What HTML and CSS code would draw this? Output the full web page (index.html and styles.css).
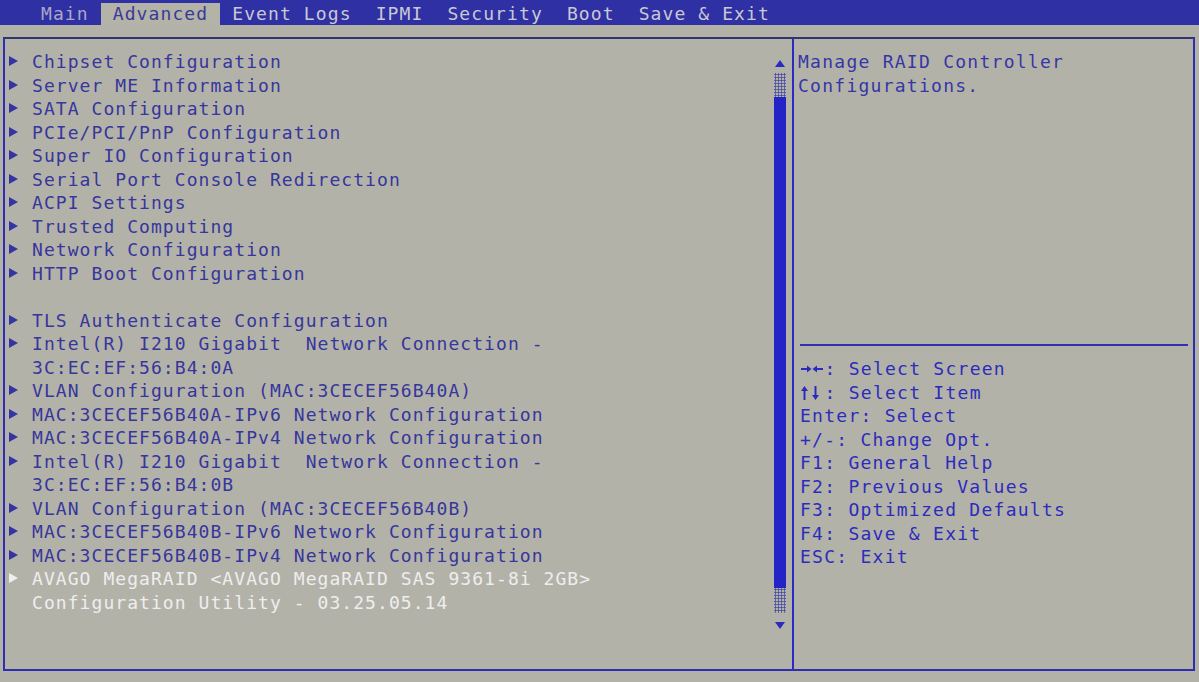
FILE: index.html
```html
<!DOCTYPE html>
<html>
<head>
<meta charset="utf-8">
<link rel="stylesheet" href="styles.css">
</head>
<body>
<div class="topbar">
  <span class="tab tab-dim">Main</span>
  <span class="tab tab-active">Advanced</span>
  <span class="tab">Event Logs</span>
  <span class="tab">IPMI</span>
  <span class="tab">Security</span>
  <span class="tab">Boot</span>
  <span class="tab">Save &amp; Exit</span>
</div>
<div class="frame">
  <div class="left">
    <div class="menu">
      <div class="row"><span class="mark"><i></i></span><span>Chipset Configuration</span></div>
      <div class="row"><span class="mark"><i></i></span><span>Server ME Information</span></div>
      <div class="row"><span class="mark"><i></i></span><span>SATA Configuration</span></div>
      <div class="row"><span class="mark"><i></i></span><span>PCIe/PCI/PnP Configuration</span></div>
      <div class="row"><span class="mark"><i></i></span><span>Super IO Configuration</span></div>
      <div class="row"><span class="mark"><i></i></span><span>Serial Port Console Redirection</span></div>
      <div class="row"><span class="mark"><i></i></span><span>ACPI Settings</span></div>
      <div class="row"><span class="mark"><i></i></span><span>Trusted Computing</span></div>
      <div class="row"><span class="mark"><i></i></span><span>Network Configuration</span></div>
      <div class="row"><span class="mark"><i></i></span><span>HTTP Boot Configuration</span></div>
      <div class="row"><span class="mark"></span><span>&nbsp;</span></div>
      <div class="row"><span class="mark"><i></i></span><span>TLS Authenticate Configuration</span></div>
      <div class="row"><span class="mark"><i></i></span><span>Intel(R) I210 Gigabit&nbsp; Network Connection -<br>3C:EC:EF:56:B4:0A</span></div>
      <div class="row"><span class="mark"><i></i></span><span>VLAN Configuration (MAC:3CECEF56B40A)</span></div>
      <div class="row"><span class="mark"><i></i></span><span>MAC:3CECEF56B40A-IPv6 Network Configuration</span></div>
      <div class="row"><span class="mark"><i></i></span><span>MAC:3CECEF56B40A-IPv4 Network Configuration</span></div>
      <div class="row"><span class="mark"><i></i></span><span>Intel(R) I210 Gigabit&nbsp; Network Connection -<br>3C:EC:EF:56:B4:0B</span></div>
      <div class="row"><span class="mark"><i></i></span><span>VLAN Configuration (MAC:3CECEF56B40B)</span></div>
      <div class="row"><span class="mark"><i></i></span><span>MAC:3CECEF56B40B-IPv6 Network Configuration</span></div>
      <div class="row"><span class="mark"><i></i></span><span>MAC:3CECEF56B40B-IPv4 Network Configuration</span></div>
      <div class="row row-sel"><span class="mark"><i></i></span><span>AVAGO MegaRAID &lt;AVAGO MegaRAID SAS 9361-8i 2GB&gt;<br>Configuration Utility - 03.25.05.14</span></div>
    </div>
    <div class="scroll">
      <div class="arrow-up"></div>
      <div class="dots dots-top"></div>
      <div class="thumb"></div>
      <div class="dots dots-bot"></div>
      <div class="arrow-down"></div>
    </div>
  </div>
  <div class="right">
    <div class="help">Manage RAID Controller<br>Configurations.</div>
    <div class="rule"></div>
    <div class="keys">
      <div><svg class="arr" width="24" height="14" viewBox="0 0 24 14"><path d="M1 6h6V3.5l4.5 3.5L7 10.5V8H1z M23 6h-6V3.5L12.5 7 17 10.5V8h6z" fill="currentColor"/></svg>: Select Screen</div>
      <div><svg class="arr" width="24" height="14" viewBox="0 0 24 14"><path d="M3.5 14V5H1l3.5-5L8 5H5.5v9z M14.5 0v9H12l3.5 5L19 9h-2.5V0z" fill="currentColor"/></svg>: Select Item</div>
      <div>Enter: Select</div>
      <div>+/-: Change Opt.</div>
      <div>F1: General Help</div>
      <div>F2: Previous Values</div>
      <div>F3: Optimized Defaults</div>
      <div>F4: Save &amp; Exit</div>
      <div>ESC: Exit</div>
    </div>
  </div>
</div>
</body>
</html>
```
FILE: styles.css
```css
html, body {
  margin: 0;
  padding: 0;
}
body {
  width: 1199px;
  height: 682px;
  overflow: hidden;
  background: #b3b2a9;
  font-family: "DejaVu Sans Mono", "Liberation Mono", monospace;
  font-size: 18px;
}
.topbar {
  height: 25px;
  background: #2f30a4;
  display: flex;
  align-items: flex-end;
  padding-left: 29px;
}
.tab {
  height: 22px;
  line-height: 22px;
  padding: 0 12px;
  color: #c9c9d2;
  letter-spacing: 1.1px;
  white-space: pre;
}
.tab-dim {
  color: #a9a9c4;
}
.tab-active {
  background: #b4b3a8;
  color: #3a3a98;
}
.frame {
  margin: 12px 0 0 3px;
  width: 1188px;
  height: 630px;
  border: 2px solid #2e2eb0;
  border-top-color: #34346e;
  display: grid;
  grid-template-columns: 787px 1fr;
}
.left {
  display: flex;
}
.menu {
  flex: 1;
  padding-top: 11px;
  color: #36369c;
  letter-spacing: 1.06px;
  line-height: 23.5px;
}
.row {
  display: flex;
  white-space: nowrap;
}
.mark {
  width: 27px;
  flex: none;
  display: flex;
  align-items: flex-start;
}
.mark i {
  display: block;
  margin: 6px 0 0 4px;
  width: 0;
  height: 0;
  border-left: 9px solid #3434a4;
  border-top: 5.5px solid transparent;
  border-bottom: 5.5px solid transparent;
}
.row-sel {
  color: #eeeeee;
}
.row-sel .mark i {
  border-left-color: #eeeeee;
}
.scroll {
  width: 13px;
  margin-right: 6px;
  display: flex;
  flex-direction: column;
  align-items: center;
}
.arrow-up {
  margin-top: 21px;
  width: 0;
  height: 0;
  border-left: 5px solid transparent;
  border-right: 5px solid transparent;
  border-bottom: 7px solid #2a2ac0;
}
.arrow-down {
  margin-top: 9px;
  width: 0;
  height: 0;
  border-left: 5px solid transparent;
  border-right: 5px solid transparent;
  border-top: 7px solid #2a2ac0;
}
.dots {
  width: 12px;
  background: radial-gradient(circle, #4848a8 0.9px, transparent 1.3px) 0 0 / 3px 3px;
}
.dots-top {
  margin-top: 6px;
  height: 24px;
}
.dots-bot {
  height: 25px;
}
.thumb {
  width: 12px;
  height: 491px;
  background: #2323c8;
}
.right {
  border-left: 2px solid #2a2ac4;
  display: flex;
  flex-direction: column;
  letter-spacing: 1.26px;
  line-height: 23.5px;
}
.help {
  height: 294px;
  padding: 11px 0 0 4px;
  color: #3636a6;
}
.rule {
  height: 2px;
  margin: 0 5px 0 6px;
  background: #3030b4;
}
.keys {
  padding: 11px 0 0 6px;
  color: #2c2cbc;
}
.arr {
  vertical-align: -1px;
  margin-right: 0.5px;
}
```
